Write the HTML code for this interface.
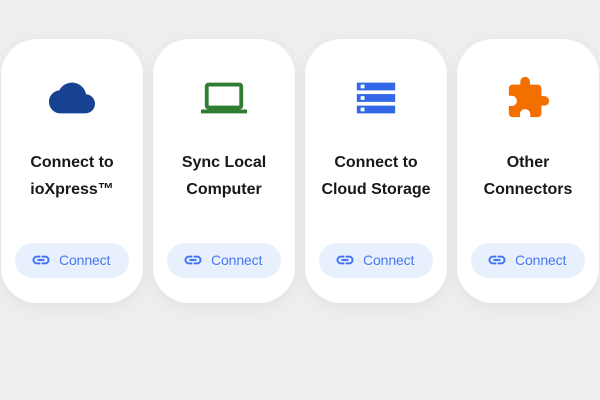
<!DOCTYPE html>
<html><head><meta charset="utf-8"><style>
html,body{margin:0;padding:0;width:600px;height:400px;overflow:hidden;background:#eeeeee;font-family:"Liberation Sans",sans-serif}
.card{position:absolute;top:39px;width:142px;height:264px;background:#fff;border-radius:36px;box-shadow:0 4px 16px rgba(0,0,0,.05)}
.ic{position:absolute;left:48px;top:35.5px;width:46px;height:46px}
.t{position:absolute;left:0;width:142px;top:110px;text-align:center;font-weight:700;font-size:16px;line-height:27px;color:#16181c;letter-spacing:-.02px}
.b{position:absolute;left:14px;top:204px;width:114px;height:35px;border-radius:18px;background:#e8f0fe;color:#4a78ee;font-size:14px;line-height:34px}
.b svg{position:absolute;left:16px;top:7px;width:20px;height:20px;fill:#3f72f0;stroke:#3f72f0;stroke-width:.4}
.b span{position:absolute;left:44px;top:0;letter-spacing:-.12px}
</style></head><body>
<div class="card" style="left:1px">
<svg class="ic" viewBox="0 0 24 24" fill="#174291"><path d="M19.35 10.04C18.67 6.59 15.64 4 12 4 9.11 4 6.6 5.64 5.35 8.04 2.34 8.36 0 10.91 0 14c0 3.31 2.69 6 6 6h13c2.76 0 5-2.24 5-5 0-2.64-2.05-4.78-4.65-4.96z"/></svg>
<div class="t">Connect to<br>ioXpress™</div>
<div class="b"><svg viewBox="0 0 24 24"><path d="M3.9 12c0-1.71 1.39-3.1 3.1-3.1h4V7H7c-2.76 0-5 2.24-5 5s2.24 5 5 5h4v-1.9H7c-1.71 0-3.1-1.39-3.1-3.1zM8 13h8v-2H8v2zm9-6h-4v1.9h4c1.71 0 3.1 1.39 3.1 3.1s-1.39 3.1-3.1 3.1h-4V17h4c2.76 0 5-2.24 5-5s-2.24-5-5-5z"/></svg><span>Connect</span></div>
</div>
<div class="card" style="left:153px">
<svg class="ic" viewBox="0 0 24 24" fill="#2e7d32"><path d="M20 18c1.1 0 1.99-.9 1.99-2L22 6c0-1.1-.9-2-2-2H4c-1.1 0-2 .9-2 2v10c0 1.1.9 2 2 2H0v2h24v-2h-4zM4 6h16v10H4V6z"/></svg>
<div class="t">Sync Local<br>Computer</div>
<div class="b"><svg viewBox="0 0 24 24"><path d="M3.9 12c0-1.71 1.39-3.1 3.1-3.1h4V7H7c-2.76 0-5 2.24-5 5s2.24 5 5 5h4v-1.9H7c-1.71 0-3.1-1.39-3.1-3.1zM8 13h8v-2H8v2zm9-6h-4v1.9h4c1.71 0 3.1 1.39 3.1 3.1s-1.39 3.1-3.1 3.1h-4V17h4c2.76 0 5-2.24 5-5s-2.24-5-5-5z"/></svg><span>Connect</span></div>
</div>
<div class="card" style="left:305px">
<svg class="ic" viewBox="0 0 24 24" fill="#3268e8"><path d="M2 20h20v-4H2v4zm2-3h2v2H4v-2zM2 4v4h20V4H2zm4 3H4V5h2v2zm-4 7h20v-4H2v4zm2-3h2v2H4v-2z"/></svg>
<div class="t">Connect to<br>Cloud Storage</div>
<div class="b"><svg viewBox="0 0 24 24"><path d="M3.9 12c0-1.71 1.39-3.1 3.1-3.1h4V7H7c-2.76 0-5 2.24-5 5s2.24 5 5 5h4v-1.9H7c-1.71 0-3.1-1.39-3.1-3.1zM8 13h8v-2H8v2zm9-6h-4v1.9h4c1.71 0 3.1 1.39 3.1 3.1s-1.39 3.1-3.1 3.1h-4V17h4c2.76 0 5-2.24 5-5s-2.24-5-5-5z"/></svg><span>Connect</span></div>
</div>
<div class="card" style="left:457px">
<svg class="ic" viewBox="0 0 24 24" fill="#f26f00"><path d="M20.5 11H19V7c0-1.1-.9-2-2-2h-4V3.5C13 2.12 11.88 1 10.5 1S8 2.12 8 3.5V5H4c-1.1 0-1.99.9-1.99 2v3.8H3.5c1.49 0 2.7 1.21 2.7 2.7s-1.21 2.7-2.7 2.7H2V20c0 1.1.9 2 2 2h3.8v-1.5c0-1.49 1.21-2.7 2.7-2.7 1.49 0 2.7 1.21 2.7 2.7V22H17c1.1 0 2-.9 2-2v-4h1.5c1.38 0 2.5-1.12 2.5-2.5S21.88 11 20.5 11z"/></svg>
<div class="t">Other<br>Connectors</div>
<div class="b"><svg viewBox="0 0 24 24"><path d="M3.9 12c0-1.71 1.39-3.1 3.1-3.1h4V7H7c-2.76 0-5 2.24-5 5s2.24 5 5 5h4v-1.9H7c-1.71 0-3.1-1.39-3.1-3.1zM8 13h8v-2H8v2zm9-6h-4v1.9h4c1.71 0 3.1 1.39 3.1 3.1s-1.39 3.1-3.1 3.1h-4V17h4c2.76 0 5-2.24 5-5s-2.24-5-5-5z"/></svg><span>Connect</span></div>
</div>
</body></html>
